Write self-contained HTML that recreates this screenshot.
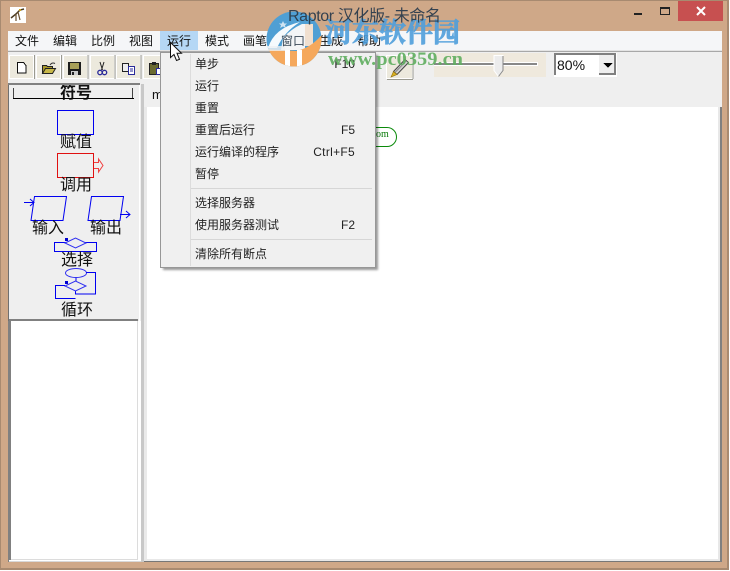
<!DOCTYPE html>
<html><head><meta charset="utf-8"><style>
html,body{margin:0;padding:0;background:#fff}
svg{display:block}
text{font-family:"Liberation Sans","Noto Sans CJK SC",sans-serif;fill:#111}
.m{font-size:12px}
.l{font-size:16px;text-anchor:middle}
.e{font-size:12px;fill:#222}
.r{font-size:12px;fill:#222;text-anchor:end}
.btn{fill:#ece9dd;stroke:#fff;stroke-width:1}
</style></head><body>
<svg width="730" height="571" viewBox="0 0 730 571" xmlns="http://www.w3.org/2000/svg" shape-rendering="crispEdges">
<defs>
<filter id="sh" x="-5%" y="-5%" width="110%" height="110%"><feGaussianBlur stdDeviation="1"/></filter>
<clipPath id="lc"><circle cx="294" cy="39" r="27.500"/></clipPath>
</defs>
<!-- frame -->
<rect width="730" height="571" fill="#fff"/>
<rect width="729" height="570" fill="#a88a70"/>
<rect x="1" y="1" width="726" height="567" fill="#cfa888"/>
<!-- close & window buttons -->
<rect x="678" y="1" width="45" height="20" fill="#c75050"/>
<path d="M697 7l8 8M705 7l-8 8" stroke="#fff" stroke-width="2" shape-rendering="auto"/>
<rect x="634" y="13" width="8" height="2" fill="#222"/>
<rect x="660.500" y="8.500" width="9" height="6" fill="none" stroke="#222"/><rect x="660" y="7" width="10" height="2" fill="#222"/>
<!-- app icon -->
<rect x="10" y="7" width="16" height="16" fill="#fff"/>
<path d="M11 18l5-4 4-4 4-1" stroke="#4a3a20" stroke-width="1.500" fill="none" shape-rendering="auto"/>
<path d="M16 14l0 7M18 12l2 8" stroke="#6a5030" stroke-width="1.200" fill="none" shape-rendering="auto"/>
<rect x="19" y="9" width="2" height="2" fill="#c8a020"/>
<!-- client -->
<rect x="8" y="31" width="714" height="531" fill="#efefef"/>
<rect x="8" y="31" width="714" height="19" fill="#f5f6f8"/>
<rect x="8" y="50" width="714" height="1" fill="#e4e4e4"/>
<rect x="8" y="51" width="714" height="1" fill="#a8a8a8"/>
<!-- menubar -->
<rect x="160" y="31" width="38" height="19" fill="#b5d7f5"/>
<text class="m" x="15" y="45">文件</text>
<text class="m" x="53" y="45">编辑</text>
<text class="m" x="91" y="45">比例</text>
<text class="m" x="129" y="45">视图</text>
<text class="m" x="167" y="45">运行</text>
<text class="m" x="205" y="45">模式</text>
<text class="m" x="243" y="45">画笔</text>
<text class="m" x="319" y="45">生成</text>
<text class="m" x="357" y="45">帮助</text>
<!-- toolbar buttons -->
<g>
<rect class="btn" x="9.500" y="55.500" width="24" height="23"/>
<rect class="btn" x="36.500" y="55.500" width="24" height="23"/>
<rect class="btn" x="63.500" y="55.500" width="24" height="23"/>
<rect class="btn" x="90.500" y="55.500" width="24" height="23"/>
<rect class="btn" x="116.500" y="55.500" width="24" height="23"/>
<rect class="btn" x="143.500" y="55.500" width="21" height="23"/>
<rect class="btn" x="386.500" y="55.500" width="26" height="23"/>
<path d="M34.500 55v24M61.500 55v24M88 55v24M115 55v24M141 55v24M413 55v24M387 79.500h26" stroke="#9a9a90" fill="none"/>
</g>
<!-- new -->
<path d="M17.500 62.500h6l2.500 3v7.500h-8.500z" fill="#fff" stroke="#111"/>
<!-- open -->
<path d="M42.500 73.500v-8h4l1 1h5v7z" fill="#a89828" stroke="#222"/>
<path d="M42.500 73.500l3-5h10l-3 5z" fill="#c8b848" stroke="#222" shape-rendering="auto"/>
<path d="M50 65q2-3 5-1.500" stroke="#333" fill="none" shape-rendering="auto"/>
<!-- save -->
<rect x="68" y="62" width="13" height="13" fill="#1c1c1c"/>
<rect x="70" y="63" width="9" height="6" fill="#a8a058"/>
<rect x="71" y="71" width="7" height="4" fill="#ccc"/>
<rect x="72" y="72" width="2" height="3" fill="#222"/>
<!-- cut -->
<path d="M100 62l2.500 8M104 62l-2.500 8" stroke="#222" fill="none" shape-rendering="auto"/>
<circle cx="100" cy="72.500" r="2.200" fill="none" stroke="#2a2a9a" stroke-width="1.300" shape-rendering="auto"/>
<circle cx="104.500" cy="72.500" r="2.200" fill="none" stroke="#2a2a9a" stroke-width="1.300" shape-rendering="auto"/>
<!-- copy -->
<path d="M122.500 63.500h6v8h-6z" fill="#eee" stroke="#222"/>
<path d="M128.500 66.500h6v8h-6z" fill="#fff" stroke="#2a2a9a"/>
<path d="M130 69h3M130 71h3" stroke="#2a2a9a"/>
<!-- paste -->
<path d="M149.500 63.500h9v11h-9z" fill="#6a6a30" stroke="#222"/>
<rect x="152" y="62" width="4" height="3" fill="#222"/>
<path d="M156.500 68.500h6v6h-6z" fill="#fff" stroke="#2a2a9a"/>
<!-- pencil -->
<g shape-rendering="auto">
<path d="M393.500 71.500L405 59.500l3.500 3L397 74.500z" fill="#d0d0d0" stroke="#444"/>
<path d="M395 72.500L406 61" stroke="#888" fill="none"/>
<path d="M393.500 71.500l3.500 3-6 2.500z" fill="#d8b020" stroke="#907010" stroke-width=".6"/>
</g>
<!-- slider -->
<rect x="434" y="53" width="112" height="24" fill="#efe9dd"/>
<rect x="434" y="62" width="104" height="4" fill="#fff"/>
<rect x="434" y="63" width="103" height="2" fill="#888"/>
<path d="M494 55.500h9v15l-4.500 6-4.500-6z" fill="#ececec" stroke="#fff" shape-rendering="auto"/>
<path d="M503 56v14.500l-4.500 6" fill="none" stroke="#888" shape-rendering="auto"/>
<!-- combo -->
<rect x="554" y="53" width="63" height="24" fill="#fff"/>
<rect x="554" y="53" width="62" height="2" fill="#808080"/>
<rect x="554" y="53" width="2" height="22" fill="#808080"/>
<rect x="599" y="55" width="17" height="20" fill="#eee"/>
<rect x="599" y="73" width="17" height="2" fill="#808080"/>
<rect x="614" y="55" width="2" height="20" fill="#808080"/>
<path d="M603 63h10l-5 4.500z" fill="#000"/>
<text x="557" y="70" style="font-size:14px;fill:#111">80%</text>
<!-- left panel -->
<rect x="8" y="85" width="1" height="476" fill="#707070"/>
<rect x="139" y="84" width="1" height="477" fill="#ffffff"/>
<rect x="141" y="84" width="3" height="478" fill="#c8c8c8"/>
<rect x="9" y="85" width="130" height="235" fill="#efefef"/>
<path d="M13.500 88v11M132.500 88v11" stroke="#444"/>
<text x="76" y="98" style="font-size:16px;font-weight:bold;text-anchor:middle">符号</text>
<rect x="13" y="98" width="121" height="1" fill="#000"/>
<rect x="8" y="81" width="132" height="2" fill="#efefef"/>
<rect x="8" y="83" width="132" height="2" fill="#808080"/>
<!-- assign -->
<rect x="57.500" y="110.500" width="36" height="24" fill="none" stroke="#0000f0"/>
<text class="l" x="76" y="147">赋值</text>
<!-- call -->
<rect x="57.500" y="153.500" width="36" height="24" fill="none" stroke="#e01010"/>
<path d="M94 162.500h4.500v-3.500l4.500 6.500-4.500 6.500v-3.500h-4.500" fill="none" stroke="#f04040" shape-rendering="auto"/>
<text class="l" x="76" y="190">调用</text>
<!-- input -->
<g shape-rendering="auto">
<path d="M34.500 196.500h32l-3.500 24h-32z" fill="none" stroke="#0000f0"/>
<path d="M24 202.500h10M30 199l4 3.500-4 3.500" fill="none" stroke="#0000f0"/>
<path d="M91.500 196.500h32l-3.500 24h-32z" fill="none" stroke="#0000f0"/>
<path d="M120 214.500h10M126 211l4 3.500-4 3.500" fill="none" stroke="#0000f0"/>
</g>
<text class="l" x="48" y="233">输入</text>
<text class="l" x="106" y="233">输出</text>
<!-- select -->
<rect x="54.500" y="242.500" width="42" height="9" fill="none" stroke="#0000f0"/>
<path d="M65 243l10.500-5 10.500 5-10.500 5z" fill="#efefef" stroke="#3030f0" shape-rendering="auto"/>
<rect x="65" y="238" width="3" height="3" fill="#0000d0"/>
<text class="l" x="77" y="265">选择</text>
<!-- loop -->
<g shape-rendering="auto">
<ellipse cx="76" cy="273" rx="10.500" ry="4.500" fill="none" stroke="#3030f0"/>
<path d="M86 272.500h9.500v21.500h-20v-3M76 278v3" fill="none" stroke="#0000f0"/>
<path d="M65 286l10.500-5 10.500 5-10.500 5z" fill="#efefef" stroke="#3030f0"/>
<path d="M65 285.500h-9.500v13h20" fill="none" stroke="#0000f0"/>
</g>
<rect x="65" y="281" width="3" height="3" fill="#0000d0"/>
<text class="l" x="77" y="315">循环</text>
<!-- lower list -->
<rect x="9" y="319" width="129" height="2" fill="#808080"/>
<rect x="8" y="321" width="3" height="241" fill="#808080"/>
<rect x="11" y="321" width="127" height="239" fill="#fff"/>
<rect x="137" y="321" width="1" height="238" fill="#dcdcdc"/>
<rect x="138" y="321" width="3" height="240" fill="#fff"/>
<rect x="11" y="559" width="127" height="1" fill="#dcdcdc"/>
<rect x="9" y="560" width="132" height="1" fill="#fff"/>
<rect x="9" y="561" width="132" height="1" fill="#d8d8d8"/>
<!-- tab & canvas -->
<rect x="144" y="84" width="578" height="23" fill="#efefef"/>
<text x="152" y="99" style="font-size:13px">m</text>
<rect x="147" y="107" width="573" height="452" fill="#fff"/>
<rect x="144" y="107" width="3" height="454" fill="#eaeaea"/>
<rect x="718" y="107" width="2" height="454" fill="#e8e8e8"/>
<rect x="144" y="559" width="576" height="2" fill="#e8e8e8"/>
<rect x="144" y="561" width="578" height="1" fill="#777"/>
<rect x="720" y="107" width="2" height="455" fill="#808080"/>
<!-- End oval -->
<rect x="340" y="127.500" width="56.500" height="19" rx="9.500" fill="#fff" stroke="#0a8a0a" shape-rendering="auto"/>
<text x="376" y="137" style="font-family:'Liberation Serif',serif;font-size:10px;fill:#0a7a0a">om</text>
<!-- menu -->
<rect x="163" y="55" width="215" height="215" fill="#000" opacity=".4" filter="url(#sh)"/>
<rect x="160.500" y="52.500" width="215" height="215" fill="#f0f0f0" stroke="#979797"/>
<rect x="190" y="54" width="1" height="212" fill="#dcdcdc"/>
<rect x="191" y="188" width="181" height="1" fill="#d6d6d6"/>
<rect x="191" y="239" width="181" height="1" fill="#d6d6d6"/>
<text class="e" x="195" y="68">单步</text><text class="r" x="355" y="68">F10</text>
<text class="e" x="195" y="90">运行</text>
<text class="e" x="195" y="112">重置</text>
<text class="e" x="195" y="134">重置后运行</text><text class="r" x="355" y="134">F5</text>
<text class="e" x="195" y="156">运行编译的程序</text><text class="r" x="355" y="156" style="letter-spacing:.3px">Ctrl+F5</text>
<text class="e" x="195" y="178">暂停</text>
<text class="e" x="195" y="207">选择服务器</text>
<text class="e" x="195" y="229">使用服务器测试</text><text class="r" x="355" y="229">F2</text>
<text class="e" x="195" y="258">清除所有断点</text>
<!-- cursor -->
<path d="M170.500 42.500v15l3.500-3 2.500 6 3-1.200-2.500-6h4.500z" fill="#fff" stroke="#111" shape-rendering="auto"/>
<!-- watermark logo -->
<g clip-path="url(#lc)" shape-rendering="auto">
<rect x="266" y="11" width="57" height="57" fill="#4f9fd4"/>
<path d="M281 50L283 38Q291 29 302 24L305 24V50z" fill="#f4f5f6"/>
<path d="M268 48Q274 28 300 22Q284 32 277 48z" fill="#fff" opacity=".95"/>
<path d="M305 24h8v22h-8z" fill="#f0dfcf"/>
<path d="M262 49L296 51Q312 48 324 32V72H262z" fill="#f5a85c"/>
<path d="M265 46h20v5h-20z" fill="#eef0f2" opacity=".8"/>
<path d="M285 50h5v18h-5zM297 50h5v18h-5z" fill="#fff"/>
</g>
<path d="M283 21l1.200 2.500h2.800l-2 1.800.8 2.700-2.800-1.600-2.800 1.600.8-2.700-2-1.800h2.800z" fill="#cfe3f2" shape-rendering="auto"/>
<text x="281" y="45" class="m" style="fill:#3c4a58">窗口</text>
<text x="325" y="42" textLength="135" lengthAdjust="spacingAndGlyphs" style="font-family:'Liberation Serif','Noto Serif CJK SC',serif;font-size:27px;font-weight:bold;fill:#4f9fdc;stroke:#4f9fdc;stroke-width:.8;opacity:.9">河东软件园</text>
<text x="328" y="65" textLength="135" lengthAdjust="spacingAndGlyphs" style="font-family:'Liberation Serif',serif;font-size:19px;font-weight:bold;fill:#5fae5f;opacity:.9">www.pc0359.cn</text>
<!-- title -->
<text x="288" y="21" textLength="153" style="font-size:16px;fill:#2c3c4c;opacity:.95">Raptor 汉化版- 未命名</text>
</svg>
</body></html>
